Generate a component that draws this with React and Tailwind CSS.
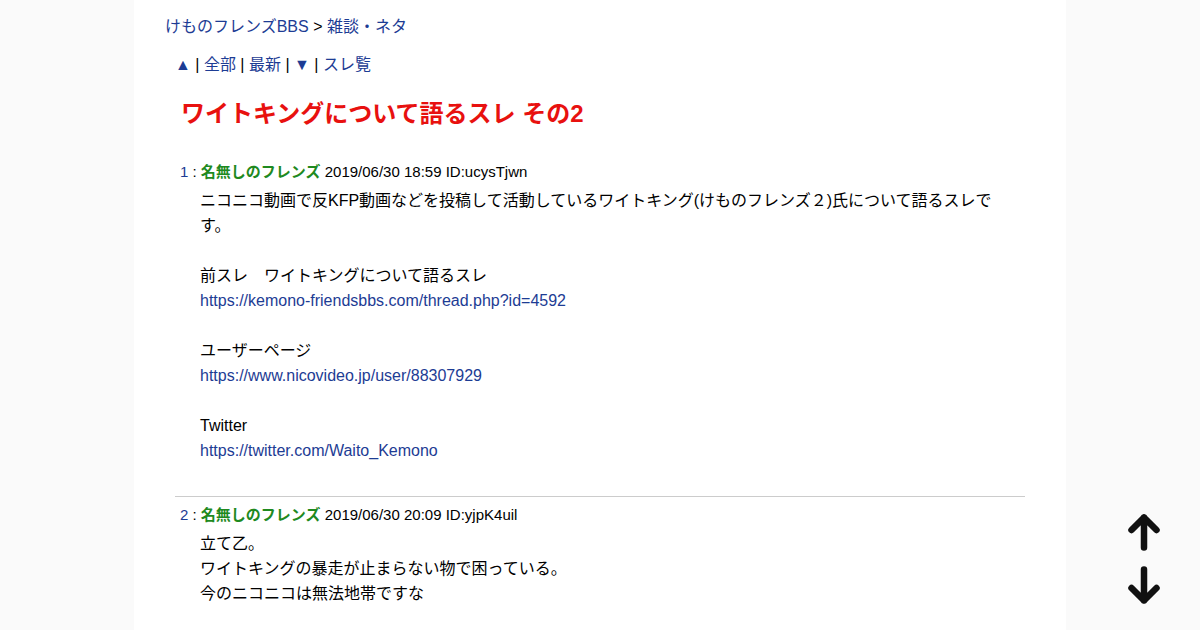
const font = { fontFamily: '"Liberation Sans", "Noto Sans CJK JP", sans-serif' };

const posts = [
  {
    no: 1,
    date: '2019/06/30 18:59',
    id: 'ucysTjwn',
    body: [
      { t: 'ニコニコ動画で反KFP動画などを投稿して活動しているワイトキング(けものフレンズ２)氏について語るスレです。' },
      { t: '' },
      { t: '前スレ　ワイトキングについて語るスレ' },
      { t: 'https://kemono-friendsbbs.com/thread.php?id=4592', link: true },
      { t: '' },
      { t: 'ユーザーページ' },
      { t: 'https://www.nicovideo.jp/user/88307929', link: true },
      { t: '' },
      { t: 'Twitter' },
      { t: 'https://twitter.com/Waito_Kemono', link: true },
    ],
  },
  {
    no: 2,
    date: '2019/06/30 20:09',
    id: 'yjpK4uil',
    body: [
      { t: '立て乙。' },
      { t: 'ワイトキングの暴走が止まらない物で困っている。' },
      { t: '今のニコニコは無法地帯ですな' },
    ],
  },
];

const Post = ({ post, last }) => (
  <div className={`px-[5px] ${last ? 'pt-[7px]' : 'pb-[33px] border-b border-[#cccccc]'}`}>
    <div className="text-[15px] leading-[22px] text-black">
      <span className="text-[#1d3c94]">{post.no}</span> :{' '}
      <b className="text-[#1f8a1f]">名無しのフレンズ</b> {post.date} ID:{post.id}
    </div>
    <div className="mt-[5px] ml-5 mr-[25px] text-base leading-[25px] text-black">
      {post.body.map((l, i) =>
        l.t === '' ? (
          <div key={i} className="h-[25px]" />
        ) : l.link ? (
          <div key={i}>
            <a className="text-[#1d3c94]">{l.t}</a>
          </div>
        ) : (
          <div key={i}>{l.t}</div>
        )
      )}
    </div>
  </div>
);

export default function App() {
  return (
    <div className="min-h-screen bg-[#fafafa]" style={font}>
      <div className="w-[932px] mx-auto bg-white min-h-screen overflow-hidden">
        {/* Breadcrumb */}
        <div className="pl-[31px] pt-[15px] text-base leading-6 text-black">
          <a className="text-[#1d3c94]">けものフレンズBBS</a> &gt; <a className="text-[#1d3c94]">雑談・ネタ</a>
        </div>

        {/* Nav */}
        <div className="pl-[41px] mt-[14px] text-base leading-6 text-black">
          <a className="text-[#1d3c94]">▲</a> | <a className="text-[#1d3c94]">全部</a> |{' '}
          <a className="text-[#1d3c94]">最新</a> | <a className="text-[#1d3c94]">▼</a> |{' '}
          <a className="text-[#1d3c94]">スレ覧</a>
        </div>

        <h1 className="pl-[47px] mt-[21px] text-2xl leading-8 font-bold text-[#e8110f]">
          ワイトキングについて語るスレ その2
        </h1>

        <div className="mx-[41px] mt-[31px]">
          {posts.map((p, i) => (
            <Post key={p.no} post={p} last={i === posts.length - 1} />
          ))}
        </div>
      </div>

      {/* Scroll arrows */}
      <div className="fixed right-[40px] bottom-[26px] flex flex-col gap-[15px]">
        <svg width="32" height="37" viewBox="0 0 32 37" fill="none" stroke="#111" strokeWidth="6.5" strokeLinecap="round" strokeLinejoin="round">
          <path d="M16 3.5V33.5M3.5 16L16 3.5L28.5 16" />
        </svg>
        <svg width="32" height="38" viewBox="0 0 32 38" fill="none" stroke="#111" strokeWidth="6.5" strokeLinecap="round" strokeLinejoin="round">
          <path d="M16 3.5V34.5M3.5 22L16 34.5L28.5 22" />
        </svg>
      </div>
    </div>
  );
}
